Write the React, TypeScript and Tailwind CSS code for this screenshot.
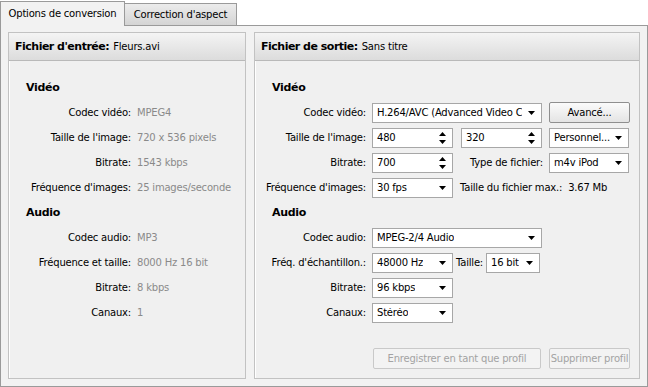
import React from 'react';

const font = { fontFamily: '"DejaVu Sans", Tahoma, Verdana, sans-serif' };

const Arrow = () => (
  <svg width="7" height="4" viewBox="0 0 7 4" className="shrink-0">
    <path d="M0 0h7L3.5 4z" fill="#000" />
  </svg>
);

const SpinArrows = () => (
  <svg width="7" height="12" viewBox="0 0 7 12" className="shrink-0">
    <path d="M3.5 0L7 4H0z M0 8h7L3.5 12z" fill="#000" />
  </svg>
);

const Select = ({ value, w }: { value: string; w: string }) => (
  <div
    className={`${w} h-[20px] bg-white border border-[#a7a7a7] flex items-center pl-[4px] pr-[6px] justify-between overflow-hidden`}
  >
    <span className="whitespace-nowrap overflow-hidden">{value}</span>
    <Arrow />
  </div>
);

const Spin = ({ value, w }: { value: string; w: string }) => (
  <div
    className={`${w} h-[20px] bg-white border border-[#a7a7a7] flex items-center pl-[4px] pr-[6px] justify-between`}
  >
    <span>{value}</span>
    <SpinArrows />
  </div>
);

const Label = ({ children, w }: { children: React.ReactNode; w: string }) => (
  <div className={`${w} shrink-0 text-right pr-[6px] whitespace-nowrap`}>{children}</div>
);

const Row = ({ children }: { children: React.ReactNode }) => (
  <div className="h-[25px] flex items-center">{children}</div>
);

const Section = ({ title }: { title: string }) => (
  <div className="h-[25px] flex items-center font-bold text-[11px] tracking-[-0.3px] pl-[17px]">{title}</div>
);

// grey gradient bar on top of each file panel
const PanelHeader = ({ title, value }: { title: string; value: string }) => (
  <div className="h-[28px] flex items-center px-[6px] border-b border-[#b9b9b9] bg-gradient-to-b from-[#f4f4f4] to-[#dcdcdc] whitespace-nowrap">
    <span className="font-bold text-[11px] tracking-[-0.5px]">{title}</span>
    <span className="ml-[4px]">{value}</span>
  </div>
);

const InfoRow = ({ label, value }: { label: string; value: string }) => (
  <Row>
    <Label w="w-[128px]">{label}</Label>
    <span className="text-[#8a8a8a] whitespace-nowrap">{value}</span>
  </Row>
);

const Button = ({ children, w, disabled }: { children: React.ReactNode; w: string; disabled?: boolean }) => (
  <div
    className={`${w} h-[21px] flex items-center justify-center rounded-[2px] border whitespace-nowrap ${
      disabled
        ? 'border-[#c9c9c9] bg-[#f3f3f3] text-[#a3a3a3]'
        : 'border-[#8f8f8f] bg-gradient-to-b from-[#fbfbfb] to-[#e4e4e4] text-black'
    }`}
  >
    {children}
  </div>
);

export default function App() {
  return (
    <div
      style={font}
      className="w-[648px] h-[387px] bg-white text-[10px] tracking-[-0.2px] text-black leading-none overflow-hidden flex flex-col"
    >
      <div className="h-[25px] flex items-end shrink-0">
        <div className="w-[125px] h-[25px] -mb-px relative z-10 bg-[#f2f2f2] border border-b-0 border-[#9a9a9a] flex items-center justify-center whitespace-nowrap">
          Options de conversion
        </div>
        <div className="w-[112px] h-[22px] border border-l-0 border-b-0 border-[#9a9a9a] bg-gradient-to-b from-[#ececec] to-[#d4d4d4] flex items-center justify-center whitespace-nowrap">
          Correction d'aspect
        </div>
      </div>
      <div className="flex-1 border border-[#9a9a9a] bg-[#f2f2f2] flex gap-[8px] px-[7px] pt-[6px] pb-[7px]">
        <div className="w-[238px] border border-[#c2c2c2] bg-[#f0f0f0] shadow-[inset_1px_1px_0_#fff] flex flex-col">
          <PanelHeader title="Fichier d'entrée:" value="Fleurs.avi" />
          <div className="pt-[14px] flex flex-col">
            <Section title="Vidéo" />
            <InfoRow label="Codec vidéo:" value="MPEG4" />
            <InfoRow label="Taille de l'image:" value="720 x 536 pixels" />
            <InfoRow label="Bitrate:" value="1543 kbps" />
            <InfoRow label="Fréquence d'images:" value="25 images/seconde" />
            <Section title="Audio" />
            <InfoRow label="Codec audio:" value="MP3" />
            <InfoRow label="Fréquence et taille:" value="8000 Hz 16 bit" />
            <InfoRow label="Bitrate:" value="8 kbps" />
            <InfoRow label="Canaux:" value="1" />
          </div>
        </div>
        <div className="flex-1 border border-[#c2c2c2] bg-[#f0f0f0] shadow-[inset_1px_1px_0_#fff] flex flex-col">
          <PanelHeader title="Fichier de sortie:" value="Sans titre" />
          <div className="pt-[14px] flex flex-col flex-1">
            <Section title="Vidéo" />
            <Row>
              <Label w="w-[117px]">Codec vidéo:</Label>
              <Select w="w-[170px]" value="H.264/AVC (Advanced Video C" />
              <div className="ml-[7px]">
                <Button w="w-[81px]">Avancé...</Button>
              </div>
            </Row>
            <Row>
              <Label w="w-[117px]">Taille de l'image:</Label>
              <Spin w="w-[81px]" value="480" />
              <div className="ml-[8px]">
                <Spin w="w-[81px]" value="320" />
              </div>
              <div className="ml-[7px]">
                <Select w="w-[80px]" value="Personnel..." />
              </div>
            </Row>
            <Row>
              <Label w="w-[117px]">Bitrate:</Label>
              <Spin w="w-[81px]" value="700" />
              <Label w="w-[96px]">Type de fichier:</Label>
              <Select w="w-[80px]" value="m4v iPod" />
            </Row>
            <Row>
              <Label w="w-[117px]">Fréquence d'images:</Label>
              <Select w="w-[81px]" value="30 fps" />
              <span className="ml-[7px] whitespace-nowrap">Taille du fichier max.:&nbsp; 3.67 Mb</span>
            </Row>
            <Section title="Audio" />
            <Row>
              <Label w="w-[117px]">Codec audio:</Label>
              <Select w="w-[170px]" value="MPEG-2/4 Audio" />
            </Row>
            <Row>
              <Label w="w-[117px]">Fréq. d'échantillon.:</Label>
              <Select w="w-[81px]" value="48000 Hz" />
              <span className="ml-[3px] mr-[3px] whitespace-nowrap">Taille:</span>
              <Select w="w-[54px]" value="16 bit" />
            </Row>
            <Row>
              <Label w="w-[117px]">Bitrate:</Label>
              <Select w="w-[81px]" value="96 kbps" />
            </Row>
            <Row>
              <Label w="w-[117px]">Canaux:</Label>
              <Select w="w-[81px]" value="Stéréo" />
            </Row>
            <div className="flex-1" />
            <div className="flex pl-[118px] gap-[8px] pb-[9px]">
              <Button w="w-[168px]" disabled>
                Enregistrer en tant que profil
              </Button>
              <Button w="w-[81px]" disabled>
                Supprimer profil
              </Button>
            </div>
          </div>
        </div>
      </div>
    </div>
  );
}
